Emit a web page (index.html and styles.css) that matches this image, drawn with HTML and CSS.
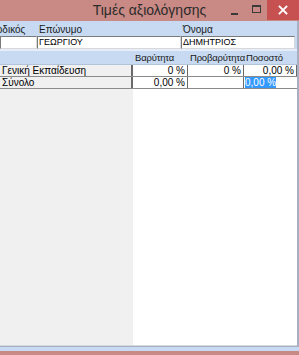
FILE: index.html
```html
<!DOCTYPE html>
<html lang="el">
<head>
<meta charset="utf-8">
<title>Τιμές αξιολόγησης</title>
<link rel="stylesheet" href="styles.css">
</head>
<body>
<div class="window">
  <div class="titlebar">
    <div class="tb-spacer"></div>
    <div class="title">Τιμές αξιολόγησης</div>
    <div class="controls">
      <span class="ctl min"><span class="min-bar"></span></span>
      <span class="ctl max"><span class="max-box"></span></span>
      <span class="ctl close">
        <svg width="10" height="10" viewBox="0 0 10 10"><path d="M1.5 1.5 L8.5 8.5 M8.5 1.5 L1.5 8.5" stroke="#fff" stroke-width="1.8" stroke-linecap="square"/></svg>
      </span>
    </div>
  </div>
  <div class="frame">
    <div class="client">
      <div class="info">
        <div class="lbl lbl-code"><span class="clip">Κωδικός</span></div>
        <div class="lbl">Επώνυμο</div>
        <div class="lbl">Όνομα</div>
        <div class="field"></div>
        <div class="field">ΓΕΩΡΓΙΟΥ</div>
        <div class="field">ΔΗΜΗΤΡΙΟΣ</div>
      </div>
      <div class="sep"></div>
      <div class="grid">
        <div class="ghead">
          <div class="gh"></div>
          <div class="gh">Βαρύτητα</div>
          <div class="gh">Προβαρύτητα</div>
          <div class="gh">Ποσοστό</div>
        </div>
        <div class="grow">
          <div class="rlabel">Γενική Εκπαίδευση</div>
          <div class="cell">0 %</div>
          <div class="cell">0 %</div>
          <div class="cell">0,00 %</div>
        </div>
        <div class="grow">
          <div class="rlabel">Σύνολο</div>
          <div class="cell">0,00 %</div>
          <div class="cell"></div>
          <div class="cell left"><span class="sel">0,00 %</span></div>
        </div>
        <div class="filler">
          <div class="fill-left"></div>
          <div class="fill-right"></div>
        </div>
      </div>
    </div>
    <div class="rborder"></div>
  </div>
  <div class="bottom">
    <div class="b-line"></div>
    <div class="b-blue"></div>
    <div class="b-red"></div>
  </div>
</div>
</body>
</html>
```
FILE: styles.css
```css
* { box-sizing: border-box; }
html, body { margin: 0; padding: 0; }
body {
  width: 299px;
  height: 355px;
  overflow: hidden;
  font-family: "Liberation Sans", Arial, sans-serif;
  font-size: 10px;
  color: #000;
  background: #fff;
}
.window {
  display: flex;
  flex-direction: column;
  height: 355px;
}
.titlebar {
  height: 21px;
  flex: none;
  background: #c98984;
  display: grid;
  grid-template-columns: 1fr auto 1fr;
  align-items: stretch;
}
.title {
  font-size: 14px;
  line-height: 21px;
  color: #2b2b2b;
}
.controls {
  display: flex;
  justify-content: flex-end;
  align-items: stretch;
}
.ctl {
  display: flex;
  align-items: center;
  justify-content: center;
  height: 20px;
}
.min { width: 23px; }
.min-bar {
  display: block;
  width: 7px;
  height: 2px;
  background: #3a3a3a;
  margin-top: 8px;
}
.max { width: 21px; }
.max-box {
  display: block;
  width: 9px;
  height: 8px;
  border: 1px solid #3a3a3a;
  border-top-width: 2px;
  margin-top: -2px;
}
.close {
  width: 32px;
  background: #c75050;
}
.frame {
  flex: 1;
  display: flex;
  min-height: 0;
}
.client {
  width: 297px;
  display: flex;
  flex-direction: column;
}
.rborder {
  width: 2px;
  background: #a6b0c2;
}
.info {
  background: #c7daf2;
  display: grid;
  grid-template-columns: 37px 144px 1fr;
  grid-template-rows: 15px 13px;
  padding-right: 2px;
}
.lbl {
  padding-left: 2px;
  padding-top: 3px;
  line-height: 11px;
  color: #1a1a1a;
  white-space: nowrap;
  overflow: hidden;
}
.lbl-code { padding-left: 0; }
.clip { display: inline-block; margin-left: -12px; }
.field {
  background: #fff;
  border-top: 1px solid #7a7a7a;
  border-left: 1px solid #7a7a7a;
  border-right: 1px solid #d8d8d8;
  border-bottom: 1px solid #d8d8d8;
  padding-left: 1px;
  font-size: 9px;
  line-height: 11px;
  white-space: nowrap;
  overflow: hidden;
}
.info .field:first-of-type { border-left: none; }
.sep {
  height: 2px;
  background: #e4edf9;
}
.grid {
  flex: 1;
  display: flex;
  flex-direction: column;
}
.ghead, .grow, .filler {
  display: grid;
  grid-template-columns: 133px 55px 56px 1fr;
}
.ghead {
  height: 14px;
  background: #c7daf2;
  border-bottom: 1px solid #b2c4dc;
}
.gh {
  padding-left: 2px;
  font-size: 9.5px;
  line-height: 13px;
  color: #1a1a1a;
  white-space: nowrap;
  letter-spacing: -0.2px;
}
.grow {
  height: 12px;
  border-bottom: 1px solid #8a8a8a;
}
.rlabel {
  background: #f0f0f0;
  padding-left: 2px;
  line-height: 11px;
  border-right: 2px solid #6a6a6a;
  white-space: nowrap;
}
.cell {
  background: #fff;
  border-right: 1px solid #6a6a6a;
  text-align: right;
  padding-right: 2px;
  line-height: 11px;
  white-space: nowrap;
}
.cell.left {
  text-align: left;
  padding-left: 1px;
  border-right: none;
}
.sel {
  background: #3399ff;
  color: #fff;
}
.filler {
  flex: 1;
  grid-template-columns: 133px 1fr;
  border-bottom: 1px solid #d8d8d8;
}
.fill-left { background: #f0f0f0; }
.fill-right { background: #fff; }
.bottom {
  flex: none;
  display: flex;
  flex-direction: column;
}
.b-line { height: 1px; background: #a6b0c2; }
.b-blue { height: 4px; background: #c7daf2; }
.b-red { height: 4px; background: #c98984; }
```
